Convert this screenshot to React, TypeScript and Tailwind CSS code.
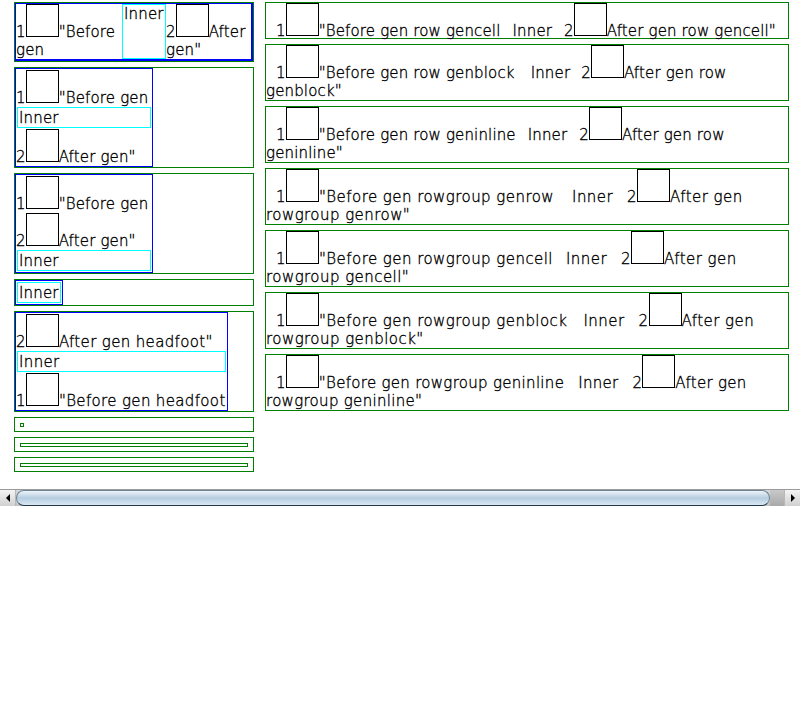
import React from "react";

const Sq = () => (
  <span className="inline-block w-[33px] h-[33px] border border-black align-baseline" />
);

const Sp = ({ w }: { w: string }) => <span className={"inline-block " + w} />;

type RowProps = {
  before: string;
  after1: string;
  after2?: string;
  g1: string;
  g2: string;
  tr: string;
};

const RightRow = ({ before, after1, after2, g1, g2, tr }: RowProps) => (
  <div
    className={
      "border border-[#008000] whitespace-nowrap " +
      tr +
      " " +
      (after2 ? "h-[57px]" : "h-[37px]")
    }
  >
    <div>
      <Sp w="w-[10px]" />1<Sq />
      {before}
      <Sp w={g1} />
      Inner
      <Sp w={g2} />2<Sq />
      {after1}
    </div>
    {after2 && <div>{after2}</div>}
  </div>
);

export default function App() {
  return (
    <div className="w-[800px] h-[725px] bg-white text-black font-['DejaVu_Sans',sans-serif] font-extralight text-[15px] leading-[18px] tracking-[0.15px] [-webkit-text-stroke:0.35px_#000] overflow-hidden">
      <div className="h-[489px] flex pt-[2px] pl-[14px]">
        {/* Left column */}
        <div className="w-[240px] flex flex-col gap-[5px]">
          {/* Box 1 */}
          <div className="h-[60px] border border-[#008000]">
            <div className="h-full flex border-l border-t border-r-2 border-b-2 border-[#0000ff]">
              <div className="w-[106px] whitespace-nowrap">
                1<Sq />
                "Before
                <br />
                gen
              </div>
              <div className="w-[44px] h-[55px] border border-[#00ffff] pl-[1px]">
                Inner
              </div>
              <div className="w-[85px] whitespace-nowrap">
                2<Sq />
                After
                <br />
                gen"
              </div>
            </div>
          </div>

          {/* Box 2 */}
          <div className="h-[101px] border border-[#008000]">
            <div className="w-[138px] border border-[#0000ff] pt-[1px] pb-[1px] pr-[1px] flex flex-col gap-[1px]">
              <div className="h-[36px] whitespace-nowrap">
                1<Sq />
                "Before gen
              </div>
              <div className="ml-[1px] w-[134px] h-[21px] border border-[#00ffff] pl-[1px] pt-[1px]">
                Inner
              </div>
              <div className="h-[36px] whitespace-nowrap">
                2<Sq />
                After gen"
              </div>
            </div>
          </div>

          {/* Box 3 */}
          <div className="h-[101px] border border-[#008000]">
            <div className="w-[138px] border border-[#0000ff] pt-[1px] pb-[1px] pr-[1px] flex flex-col gap-[1px]">
              <div className="h-[36px] whitespace-nowrap">
                1<Sq />
                "Before gen
              </div>
              <div className="h-[36px] whitespace-nowrap">
                2<Sq />
                After gen"
              </div>
              <div className="ml-[1px] w-[134px] h-[21px] border border-[#00ffff] pl-[1px] pt-[1px]">
                Inner
              </div>
            </div>
          </div>

          {/* Box 4 */}
          <div className="h-[27px] border border-[#008000]">
            <div className="w-[48px] h-[25px] border border-[#0000ff] p-[1px]">
              <div className="w-[44px] h-[21px] border border-[#00ffff] pl-[1px] pt-[1px]">
                Inner
              </div>
            </div>
          </div>

          {/* Box 5 */}
          <div className="h-[101px] border border-[#008000] tracking-[0.35px]">
            <div className="w-[213px] border border-[#0000ff] pt-[1px] pb-[1px] pr-[1px] flex flex-col gap-[1px]">
              <div className="h-[36px] whitespace-nowrap">
                2<Sq />
                After gen headfoot"
              </div>
              <div className="ml-[1px] w-[209px] h-[21px] border border-[#00ffff] pl-[1px] pt-[1px]">
                Inner
              </div>
              <div className="h-[36px] whitespace-nowrap">
                1<Sq />
                "Before gen headfoot
              </div>
            </div>
          </div>

          {/* Box 6 */}
          <div className="h-[15px] border border-[#008000] p-[5px]">
            <div className="w-[4px] h-[4px] border border-[#008000]" />
          </div>
          {/* Box 7 */}
          <div className="h-[15px] border border-[#008000] p-[5px]">
            <div className="w-full h-[4px] border border-[#008000]" />
          </div>
          {/* Box 8 */}
          <div className="h-[15px] border border-[#008000] p-[5px]">
            <div className="w-full h-[4px] border border-[#008000]" />
          </div>
        </div>

        {/* Right column */}
        <div className="ml-[11px] w-[524px] flex flex-col gap-[5px]">
          <RightRow
            before={'"Before gen row gencell'}
            after1={'After gen row gencell"'}
            g1="w-[12px]"
            g2="w-[12px]"
            tr="tracking-[0.15px]"
          />
          <RightRow
            before={'"Before gen row genblock'}
            after1="After gen row"
            after2={'genblock"'}
            g1="w-[16px]"
            g2="w-[11px]"
            tr="tracking-[0.15px]"
          />
          <RightRow
            before={'"Before gen row geninline'}
            after1="After gen row"
            after2={'geninline"'}
            g1="w-[12px]"
            g2="w-[12px]"
            tr="tracking-[0.15px]"
          />
          <RightRow
            before={'"Before gen rowgroup genrow'}
            after1="After gen"
            after2={'rowgroup genrow"'}
            g1="w-[18px]"
            g2="w-[14px]"
            tr="tracking-[0.45px]"
          />
          <RightRow
            before={'"Before gen rowgroup gencell'}
            after1="After gen"
            after2={'rowgroup gencell"'}
            g1="w-[13px]"
            g2="w-[14px]"
            tr="tracking-[0.45px]"
          />
          <RightRow
            before={'"Before gen rowgroup genblock'}
            after1="After gen"
            after2={'rowgroup genblock"'}
            g1="w-[16px]"
            g2="w-[14px]"
            tr="tracking-[0.45px]"
          />
          <RightRow
            before={'"Before gen rowgroup geninline'}
            after1="After gen"
            after2={'rowgroup geninline"'}
            g1="w-[14px]"
            g2="w-[14px]"
            tr="tracking-[0.3px]"
          />
        </div>
      </div>

      {/* Horizontal scrollbar */}
      <div className="h-[17px] flex border-t border-[#9a9a9a] bg-[#d4d4d4]">
        <div className="w-[16px] h-full flex items-center justify-center bg-gradient-to-b from-[#f4f4f4] to-[#d0d0d0] border-r border-[#b8b8b8]">
          <svg width="6" height="8" viewBox="0 0 6 8">
            <polygon points="5,0 5,8 1,4" fill="#000" />
          </svg>
        </div>
        <div className="flex-1 h-full flex bg-gradient-to-b from-[#d8d8d8] to-[#c4c4c4]">
          <div className="flex-1 h-full rounded-[8px] border border-[#6f8596] border-b-[#22394a] bg-gradient-to-b from-[#eef4f9] via-[#b5cde0] to-[#d9e7f2]" />
          <div className="w-[14px] h-full bg-gradient-to-b from-[#c9c9c9] to-[#a9a9a9]" />
        </div>
        <div className="w-[16px] h-full flex items-center justify-center bg-gradient-to-b from-[#f4f4f4] to-[#d0d0d0] border-l border-[#b8b8b8]">
          <svg width="6" height="8" viewBox="0 0 6 8">
            <polygon points="1,0 1,8 5,4" fill="#000" />
          </svg>
        </div>
      </div>
    </div>
  );
}
